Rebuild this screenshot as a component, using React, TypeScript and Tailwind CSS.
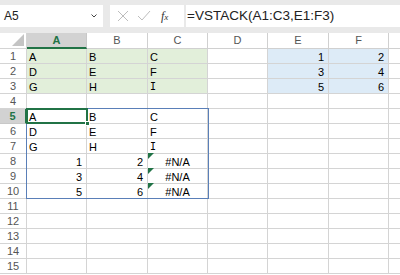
import React from "react";

const COLS = [
  { k: "A", w: 60 },
  { k: "B", w: 61 },
  { k: "C", w: 60 },
  { k: "D", w: 60 },
  { k: "E", w: 61 },
  { k: "F", w: 60 },
  { k: "G", w: 40 },
];

type Cell = { t: string; align?: "l" | "r" | "c"; bg?: string; mono?: boolean };

const data: Record<number, Record<string, Cell>> = {
  1: { A: { t: "A", bg: "g" }, B: { t: "B", bg: "g" }, C: { t: "C", bg: "g" }, E: { t: "1", align: "r", bg: "b" }, F: { t: "2", align: "r", bg: "b" } },
  2: { A: { t: "D", bg: "g" }, B: { t: "E", bg: "g" }, C: { t: "F", bg: "g" }, E: { t: "3", align: "r", bg: "b" }, F: { t: "4", align: "r", bg: "b" } },
  3: { A: { t: "G", bg: "g" }, B: { t: "H", bg: "g" }, C: { t: "I", bg: "g", mono: true }, E: { t: "5", align: "r", bg: "b" }, F: { t: "6", align: "r", bg: "b" } },
  5: { A: { t: "A" }, B: { t: "B" }, C: { t: "C" } },
  6: { A: { t: "D" }, B: { t: "E" }, C: { t: "F" } },
  7: { A: { t: "G" }, B: { t: "H" }, C: { t: "I", mono: true } },
  8: { A: { t: "1", align: "r" }, B: { t: "2", align: "r" }, C: { t: "#N/A", align: "c" } },
  9: { A: { t: "3", align: "r" }, B: { t: "4", align: "r" }, C: { t: "#N/A", align: "c" } },
  10: { A: { t: "5", align: "r" }, B: { t: "6", align: "r" }, C: { t: "#N/A", align: "c" } },
};

export default function App() {
  const rows = Array.from({ length: 15 }, (_, i) => i + 1);
  return (
    <div className="w-[400px] h-[275px] overflow-hidden bg-white" style={{ fontFamily: '"Liberation Sans", Arial, sans-serif' }}>
      {/* formula bar area */}
      <div className="bg-[#e9e9e9] pt-[5px] pb-[6px] flex gap-0">
        <div className="w-[103px] h-[22px] bg-white flex items-center justify-between pl-[4px] pr-[4px]">
          <span className="text-[12px] text-[#222]">A5</span>
          <svg width="8" height="6" viewBox="0 0 8 6" className="mr-[1px]">
            <path d="M1.5 1.5 L4 4 L6.5 1.5" stroke="#444" strokeWidth="1" fill="none" />
          </svg>
        </div>
        <div className="w-[7px]" />
        <div className="w-[74px] h-[22px] bg-white flex items-center">
          <svg width="14" height="14" viewBox="0 0 14 14" className="ml-[6px]">
            <path d="M2 2 L12 12 M12 2 L2 12" stroke="#bdbdbd" strokeWidth="1" fill="none" />
          </svg>
          <svg width="16" height="14" viewBox="0 0 16 14" className="ml-[6px]">
            <path d="M2 7 L6 11 L14 2" stroke="#bdbdbd" strokeWidth="1" fill="none" />
          </svg>
          <span className="ml-[9px] text-[12px] italic text-[#333]" style={{ fontFamily: '"Liberation Serif", serif' }}>
            f<span className="text-[9px]">x</span>
          </span>
        </div>
        <div className="w-[2px]" />
        <div className="flex-1 h-[22px] bg-white flex items-center pl-[1px]">
          <span className="text-[13.5px] text-[#222]">=VSTACK(A1:C3,E1:F3)</span>
        </div>
      </div>
      {/* grid */}
      <div className="relative">
        {/* header row */}
        <div className="flex h-[16px]">
          <div className="w-[27px] shrink-0 border-r border-b border-[#d4d4d4] bg-white relative">
            <svg width="12" height="12" viewBox="0 0 12 12" className="absolute right-[2px] bottom-[2px]">
              <path d="M12 0 L12 12 L0 12 Z" fill="#c4c4c4" />
            </svg>
          </div>
          {COLS.map((c) =>
            c.k === "A" ? (
              <div key={c.k} className="shrink-0 bg-[#d2d2d2] border-b-2 border-[#217346] border-r border-r-[#c8c8c8] flex items-center justify-center text-[11px] font-bold text-[#217346]" style={{ width: c.w }}>
                A
              </div>
            ) : (
              <div key={c.k} className="shrink-0 bg-white border-r border-b border-[#d0d0d0] flex items-center justify-center text-[11px] text-[#555]" style={{ width: c.w }}>
                {c.k === "G" ? "" : c.k}
              </div>
            )
          )}
        </div>
        {rows.map((r) => (
          <div key={r} className="flex h-[15px]">
            {r === 5 ? (
              <div className="w-[27px] shrink-0 bg-[#d2d2d2] border-r-2 border-[#217346] border-b border-b-[#c8c8c8] flex items-center justify-center text-[11px] font-bold text-[#217346]">
                5
              </div>
            ) : (
              <div className="w-[27px] shrink-0 bg-white border-r border-b border-[#d4d4d4] flex items-center justify-center text-[11px] text-[#555]">
                {r}
              </div>
            )}
            {COLS.map((c) => {
              const cell = data[r]?.[c.k];
              const bg = cell?.bg === "g" ? "bg-[#e2efda]" : cell?.bg === "b" ? "bg-[#ddebf7]" : "bg-white";
              const al = cell?.align === "r" ? "justify-end pr-[4px]" : cell?.align === "c" ? "justify-center" : "justify-start pl-[2px]";
              return (
                <div key={c.k} className={`shrink-0 border-r border-b border-[#d4d4d4] flex items-end text-[11px] leading-[10px] text-black pb-[1px] ${bg} ${al}`} style={{ width: c.w }}>
                  {cell && (
                    <span style={cell.mono ? { fontFamily: '"DejaVu Sans Mono", monospace', fontSize: "10px" } : undefined}>
                      {cell.t}
                    </span>
                  )}
                </div>
              );
            })}
          </div>
        ))}
        {/* spill range border */}
        <div className="absolute left-[26px] top-[75px] w-[183px] h-[91px] border border-[#5a7fb8] pointer-events-none" />
        {/* active cell */}
        <div className="absolute left-[26px] top-[75px] w-[62px] h-[16px] border-2 border-[#217346]" />
        <div className="absolute left-[85px] top-[88px] w-[5px] h-[5px] bg-[#217346] border border-white" />
        {/* error triangles */}
        {[120, 135, 150].map((t) => (
          <svg key={t} width="6" height="6" viewBox="0 0 6 6" className="absolute left-[148px]" style={{ top: t }}>
            <path d="M0 0 L6 0 L0 6 Z" fill="#217346" />
          </svg>
        ))}
      </div>
    </div>
  );
}
